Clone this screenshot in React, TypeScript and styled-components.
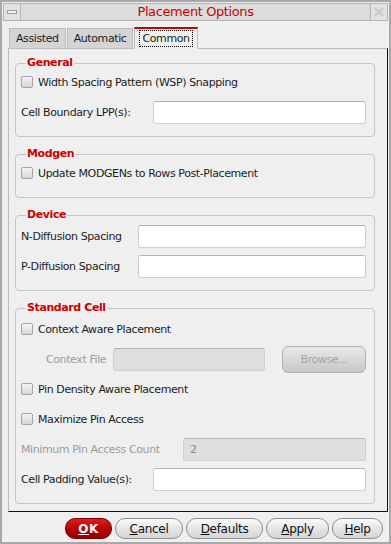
import styled, { createGlobalStyle } from "styled-components";

const GlobalStyle = createGlobalStyle`
  html, body {
    margin: 0;
    padding: 0;
    background: #efefef;
  }
  * {
    box-sizing: border-box;
  }
`;

const Window = styled.div`
  width: 391px;
  height: 544px;
  border: 2px solid #a8a8a8;
  background: #efefef;
  display: flex;
  flex-direction: column;
  font-family: "DejaVu Sans", "Liberation Sans", sans-serif;
  font-size: 11px;
  letter-spacing: -0.4px;
  color: #1c1c1c;
`;

const TitleBar = styled.div`
  height: 18px;
  margin: 1px 1px 0;
  background: #dcdcdc;
  border: 1px solid #b4b4b4;
  display: flex;
  align-items: center;
`;

const WinButton = styled.div`
  width: 18px;
  height: 18px;
  margin: -1px;
  border: 1px solid #b4b4b4;
  background: #e2e2e2;
  display: flex;
  align-items: center;
  justify-content: center;
`;

const Title = styled.div`
  flex: 1;
  text-align: center;
  color: #cc0000;
  font-size: 13px;
  line-height: 16px;
`;

const Body = styled.div`
  flex: 1;
  display: flex;
  flex-direction: column;
  padding: 6px 1px 0 6px;
`;

const TabRow = styled.div`
  display: flex;
  align-items: flex-end;
  padding-left: 1px;
  position: relative;
  z-index: 1;
  margin-bottom: -1px;
`;

const Tab = styled.div<{ $active?: boolean }>`
  height: ${(p) => (p.$active ? "22px" : "21px")};
  padding: 0 ${(p) => (p.$active ? "4px" : "6px")};
  display: flex;
  align-items: center;
  border: 1px solid #bcbcbc;
  border-bottom: ${(p) => (p.$active ? "1px solid #efefef" : "1px solid #bcbcbc")};
  border-top: ${(p) => (p.$active ? "2px solid #cc0000" : "1px solid #bcbcbc")};
  background: ${(p) => (p.$active ? "#efefef" : "#d4d4d4")};
  margin-right: 1px;
  font-size: 11px;
`;

const TabLabel = styled.span<{ $focus?: boolean }>`
  padding: 1px 2px;
  border: 1px dotted ${(p) => (p.$focus ? "#000" : "transparent")};
`;

const Panel = styled.div`
  border: 1px solid;
  border-color: #bcbcbc #111 #111 #bcbcbc;
  padding: 14px 12px 7px 6px;
  display: flex;
  flex-direction: column;
  gap: 17px;
`;

const Group = styled.div`
  border: 1px solid #c6c6c6;
  border-radius: 4px;
  padding: 0 8px 9px 5px;
`;

const Legend = styled.div`
  width: fit-content;
  margin: -8px 0 -6px 5px;
  padding: 0 1px;
  line-height: 14px;
  background: #efefef;
  color: #cc0000;
  font-weight: bold;
`;

const Rows = styled.div<{ $top: number }>`
  padding-top: ${(p) => p.$top}px;
  display: flex;
  flex-direction: column;
`;

const Row = styled.div<{ $indent?: number }>`
  height: 30px;
  display: flex;
  align-items: center;
  padding-left: ${(p) => p.$indent ?? 0}px;
`;

const Check = styled.span`
  width: 12px;
  height: 12px;
  border: 1px solid #a4a4a4;
  border-radius: 2px;
  background: linear-gradient(#f4f4f4, #d6d6d6);
  margin-right: 5px;
  flex: none;
`;

const Label = styled.span<{ $width?: number; $disabled?: boolean }>`
  width: ${(p) => (p.$width ? `${p.$width}px` : "auto")};
  flex: none;
  color: ${(p) => (p.$disabled ? "#9c9c9c" : "#1c1c1c")};
  white-space: nowrap;
`;

const Field = styled.div<{ $disabled?: boolean; $width?: number }>`
  height: 23px;
  flex: ${(p) => (p.$width ? "none" : "1")};
  width: ${(p) => (p.$width ? `${p.$width}px` : "auto")};
  border: 1px solid #cfcfcf;
  border-top-color: #b4b4b4;
  border-radius: 3px;
  background: ${(p) => (p.$disabled ? "#dedede" : "#ffffff")};
  color: #8a8a8a;
  display: flex;
  align-items: center;
  padding-left: 6px;
`;

const BrowseButton = styled.div`
  width: 87px;
  height: 27px;
  margin-left: 17px;
  border: 1px solid #b0b0b0;
  border-radius: 6px;
  background: linear-gradient(#e8e8e8, #c8c8c8);
  color: #a4a4a4;
  display: flex;
  align-items: center;
  justify-content: center;
`;

const ButtonBar = styled.div`
  display: flex;
  justify-content: flex-end;
  gap: 3px;
  padding: 6px 5px 0 0;
`;

const Button = styled.div<{ $primary?: boolean; $width: number }>`
  width: ${(p) => p.$width}px;
  height: 21px;
  border-radius: 10px;
  border: 1px solid ${(p) => (p.$primary ? "#7a0000" : "#8e8e8e")};
  background: ${(p) =>
    p.$primary
      ? "linear-gradient(#e41a1a, #b00000 60%, #9a0000)"
      : "linear-gradient(#fbfbfb, #e6e6e6 50%, #d4d4d4)"};
  color: ${(p) => (p.$primary ? "#ffffff" : "#111")};
  font-weight: ${(p) => (p.$primary ? "bold" : "normal")};
  font-size: 12px;
  letter-spacing: ${(p) => (p.$primary ? "0.5px" : "-0.3px")};
  display: flex;
  align-items: center;
  justify-content: center;
  u {
    text-decoration: underline;
  }
`;

function CheckRow({ label }: { label: string }) {
  return (
    <Row>
      <Check />
      <Label>{label}</Label>
    </Row>
  );
}

function InputRow({
  label,
  width,
  disabled,
  value,
}: {
  label: string;
  width: number;
  disabled?: boolean;
  value?: string;
}) {
  return (
    <Row>
      <Label $width={width} $disabled={disabled}>
        {label}
      </Label>
      <Field $disabled={disabled}>{value}</Field>
    </Row>
  );
}

export default function App() {
  return (
    <>
      <GlobalStyle />
      <Window>
        <TitleBar>
          <WinButton>
            <svg width="10" height="4" viewBox="0 0 10 4">
              <rect x="0.5" y="0.5" width="9" height="3" fill="#f4f4f4" stroke="#9a9a9a" />
            </svg>
          </WinButton>
          <Title>Placement Options</Title>
          <WinButton>
            <svg width="12" height="12" viewBox="0 0 12 12">
              <path
                d="M2 2 L10 10 M10 2 L2 10"
                stroke="#b8b8b8"
                strokeWidth="2.5"
                strokeDasharray="1 1"
                fill="none"
              />
            </svg>
          </WinButton>
        </TitleBar>
        <Body>
          <TabRow>
            <Tab>Assisted</Tab>
            <Tab>Automatic</Tab>
            <Tab $active>
              <TabLabel $focus>Common</TabLabel>
            </Tab>
          </TabRow>
          <Panel>
            <Group>
              <Legend>General</Legend>
              <Rows $top={3}>
                <CheckRow label="Width Spacing Pattern (WSP) Snapping" />
                <InputRow label="Cell Boundary LPP(s):" width={132} />
              </Rows>
            </Group>
            <Group>
              <Legend>Modgen</Legend>
              <Rows $top={3}>
                <CheckRow label="Update MODGENs to Rows Post-Placement" />
              </Rows>
            </Group>
            <Group>
              <Legend>Device</Legend>
              <Rows $top={5}>
                <InputRow label="N-Diffusion Spacing" width={117} />
                <InputRow label="P-Diffusion Spacing" width={117} />
              </Rows>
            </Group>
            <Group>
              <Legend>Standard Cell</Legend>
              <Rows $top={5}>
                <CheckRow label="Context Aware Placement" />
                <Row $indent={25}>
                  <Label $width={67} $disabled>
                    Context File
                  </Label>
                  <Field $disabled $width={152} />
                  <BrowseButton>Browse...</BrowseButton>
                </Row>
                <CheckRow label="Pin Density Aware Placement" />
                <CheckRow label="Maximize Pin Access" />
                <InputRow label="Minimum Pin Access Count" width={162} disabled value="2" />
                <InputRow label="Cell Padding Value(s):" width={132} />
              </Rows>
            </Group>
          </Panel>
          <ButtonBar>
            <Button $primary $width={47}>
              <u>O</u>K
            </Button>
            <Button $width={68}>
              <u>C</u>ancel
            </Button>
            <Button $width={77}>
              <u>D</u>efaults
            </Button>
            <Button $width={63}>
              <u>A</u>pply
            </Button>
            <Button $width={51}>
              <u>H</u>elp
            </Button>
          </ButtonBar>
        </Body>
      </Window>
    </>
  );
}
